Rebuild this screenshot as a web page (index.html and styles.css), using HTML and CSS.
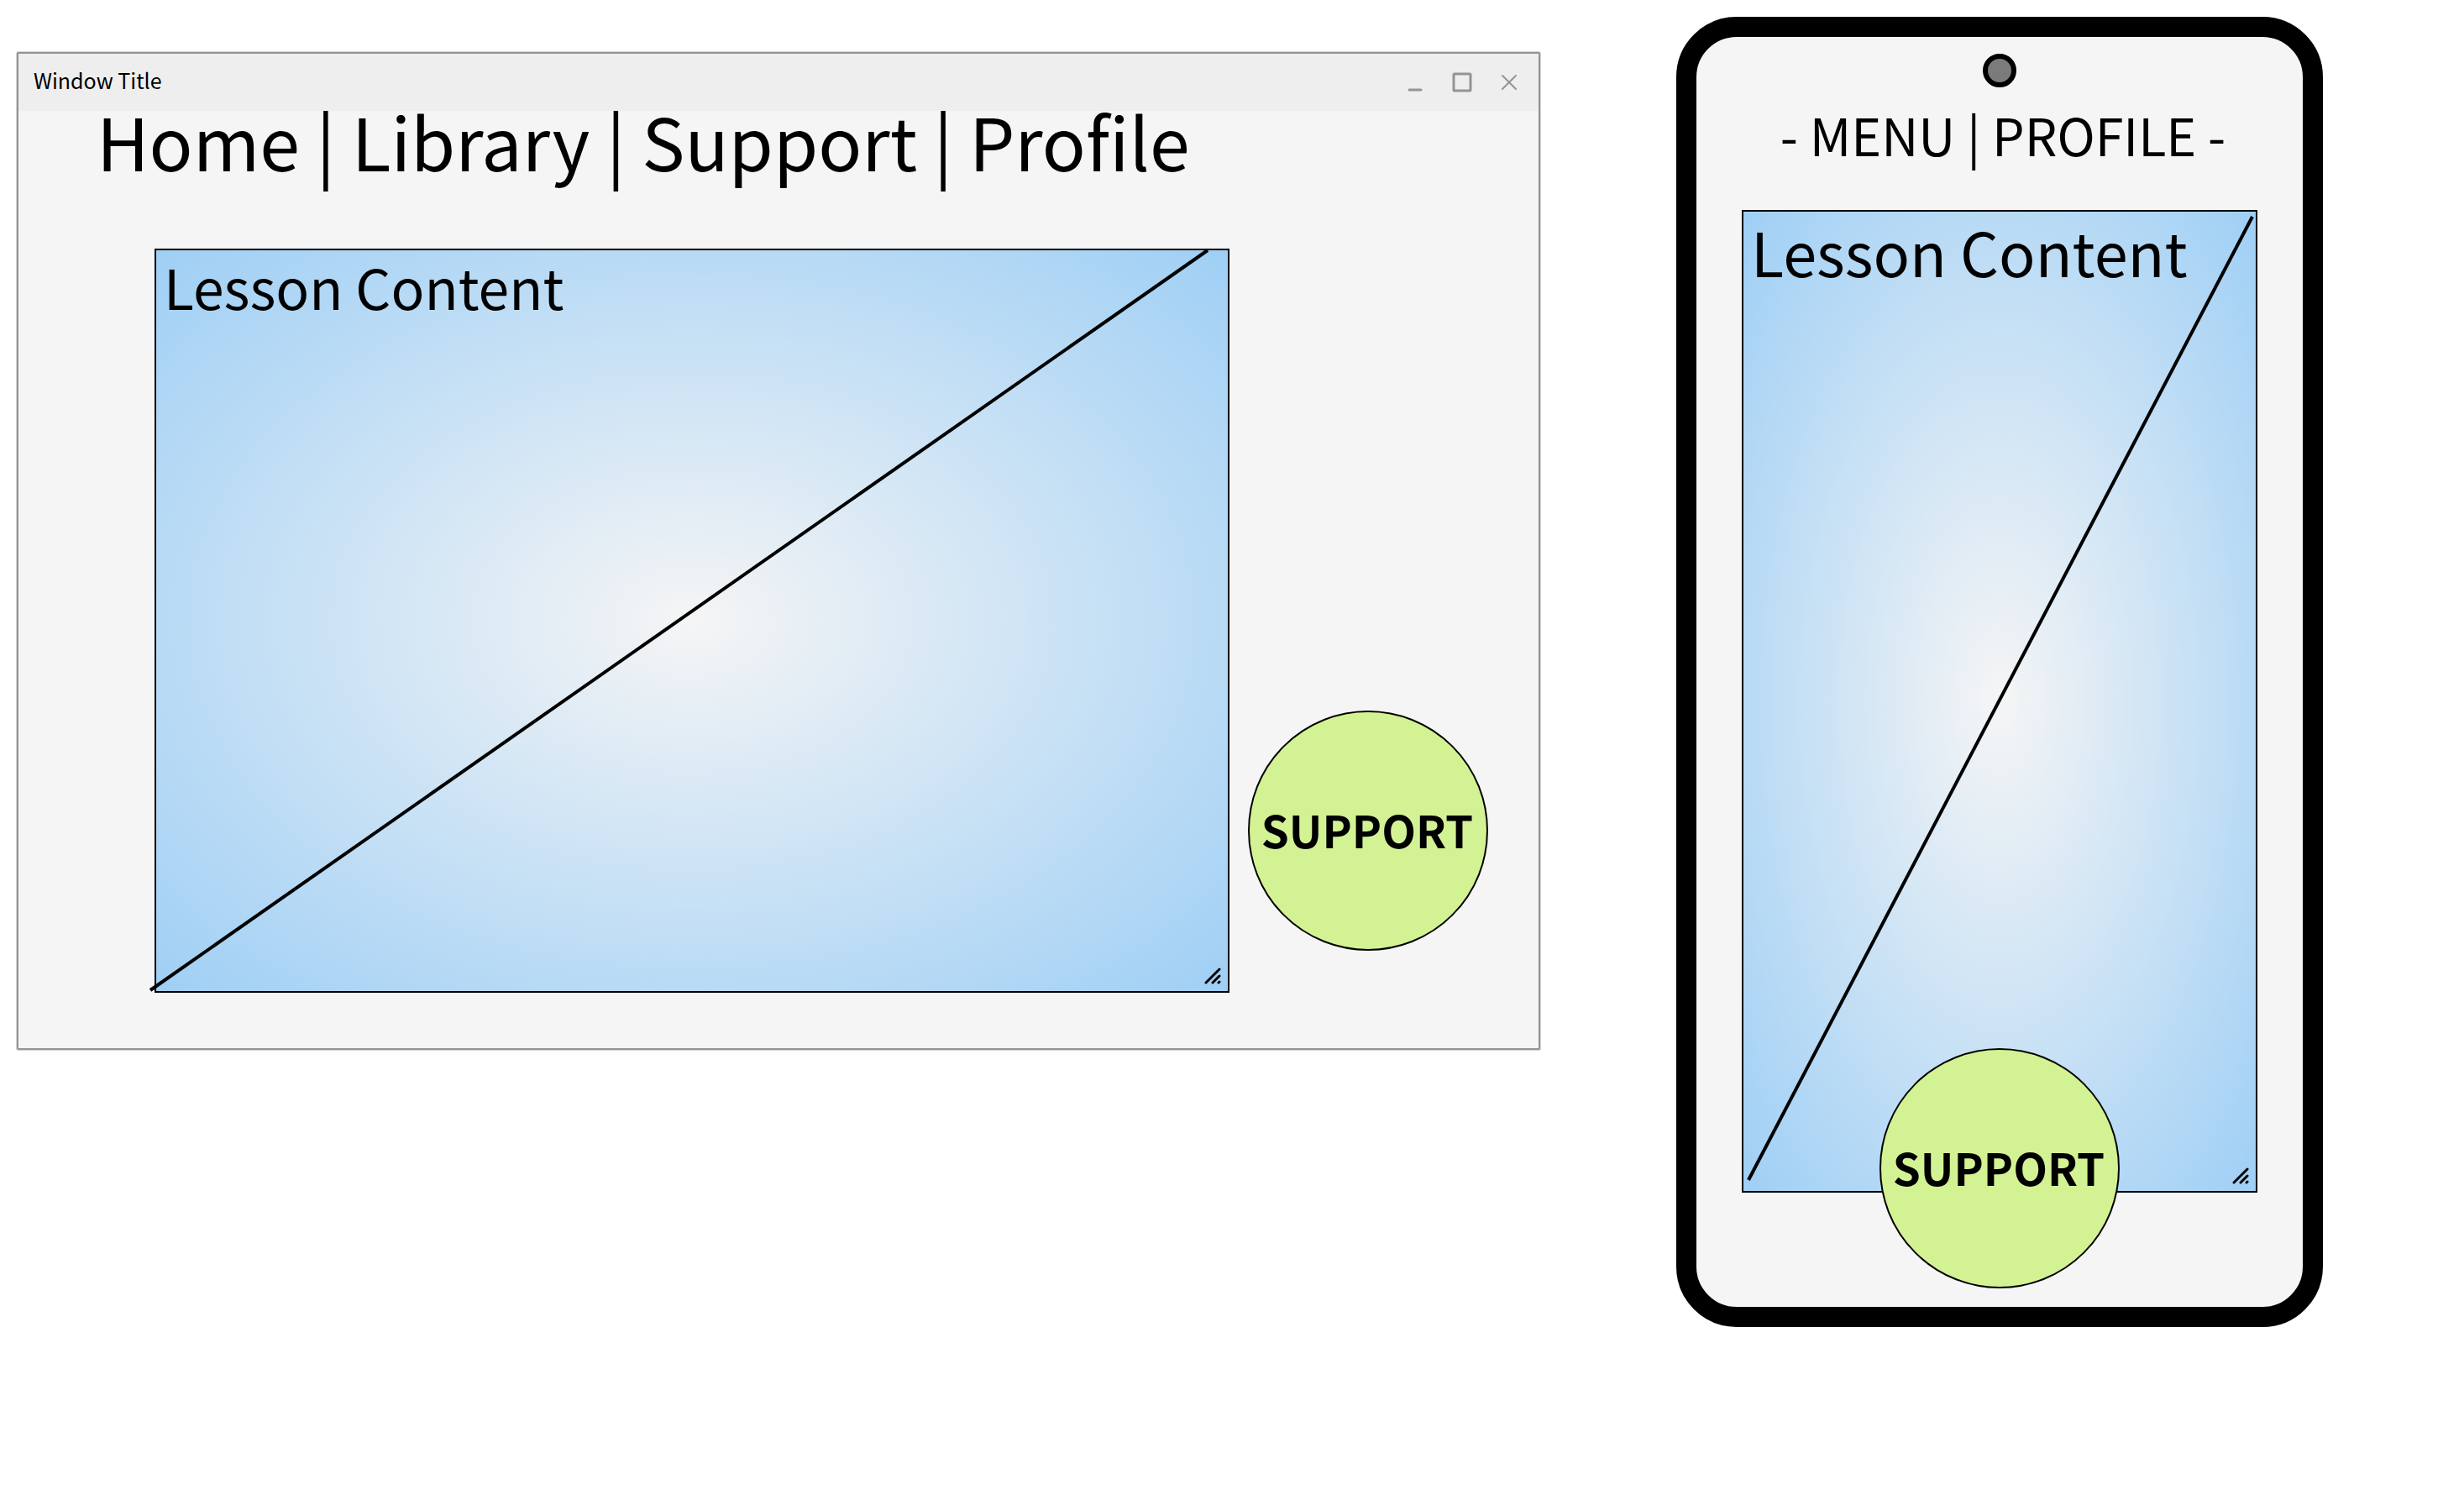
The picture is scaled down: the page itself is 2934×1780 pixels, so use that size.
FILE: index.html
```html
<!DOCTYPE html>
<html lang="en">
<head>
  <meta charset="utf-8">
  <title>Lesson wireframes</title>
  <link rel="stylesheet" href="styles.css">
</head>
<body>
  <main class="board">
    <section class="window" aria-label="Desktop layout">
      <header class="titlebar">
        <span class="titlebar-text">Window Title</span>
        <div class="window-controls">
          <button class="control" type="button" aria-label="Minimize">
            <svg viewBox="0 0 24 24"><path d="M5 21h14"/></svg>
          </button>
          <button class="control" type="button" aria-label="Maximize">
            <svg viewBox="0 0 24 24"><rect x="2" y="2" width="20" height="20" rx="1"/></svg>
          </button>
          <button class="control" type="button" aria-label="Close">
            <svg class="thin" viewBox="0 0 24 24"><path d="M4 4l16 16M20 4L4 20"/></svg>
          </button>
        </div>
      </header>
      <nav class="nav" aria-label="Main"><a href="#home">Home</a> | <a href="#library">Library</a> | <a href="#support">Support</a> | <a href="#profile">Profile</a></nav>
      <div class="workspace">
        <article class="lesson lesson-wide">
          <svg class="diagonal" viewBox="0 0 1276 882" preserveAspectRatio="none"><path d="M-7 881L1252 0"/></svg>
          <h2 class="lesson-title">Lesson Content</h2>
          <svg class="grip" viewBox="0 0 20 20"><path d="M2 18L18 2M10 18l8-8M17 18l1-1"/></svg>
        </article>
        <button class="support" type="button">SUPPORT</button>
      </div>
    </section>

    <section class="phone" aria-label="Phone layout">
      <div class="camera"></div>
      <nav class="phone-nav" aria-label="Phone">- <a href="#menu">MENU</a> | <a href="#phone-profile">PROFILE</a> -</nav>
      <article class="lesson lesson-tall">
        <svg class="diagonal" viewBox="0 0 610 1166" preserveAspectRatio="none"><path d="M6 1153L606 6"/></svg>
        <h2 class="lesson-title">Lesson Content</h2>
        <svg class="grip" viewBox="0 0 20 20"><path d="M2 18L18 2M10 18l8-8M17 18l1-1"/></svg>
      </article>
      <button class="support support-docked" type="button">SUPPORT</button>
    </section>
  </main>
</body>
</html>
```
FILE: styles.css
```css
* {
  box-sizing: border-box;
}

body {
  margin: 0;
  background: #fff;
  color: #000;
  font-family: "Noto Sans CJK SC", "Noto Sans CJK JP", sans-serif;
}

a {
  color: inherit;
  text-decoration: none;
}

button {
  margin: 0;
  padding: 0;
  color: inherit;
  font-family: inherit;
  cursor: pointer;
}

.board {
  display: grid;
  grid-template-columns: minmax(0, 1814fr) minmax(0, 770fr);
  align-items: start;
  gap: 162px;
  padding: 20px 168px 20px 20px;
}

/* Desktop window */

.window {
  margin-top: 42px;
  border: 2px solid #949494;
  border-radius: 2px;
  background: #f5f5f5;
  box-shadow: 0 0 0 1px #d4d4d4;
}

.titlebar {
  position: relative;
  z-index: 1;
  display: flex;
  align-items: center;
  justify-content: space-between;
  height: 68px;
  padding: 0 23px 0 18px;
  background: #eee;
}

.titlebar-text {
  padding-bottom: 6px;
  font-size: 25px;
  line-height: 36px;
}

.window-controls {
  display: flex;
  gap: 32px;
}

.control {
  width: 24px;
  height: 24px;
  border: 0;
  background: none;
}

.control svg {
  display: block;
  fill: none;
  stroke: #949494;
  stroke-width: 3;
  stroke-linecap: round;
}

.control .thin {
  stroke-width: 2;
}

.nav {
  padding: 0 93px 94px;
  font-size: 86px;
  line-height: 70px;
  white-space: pre;
}

.workspace {
  display: grid;
  grid-template-columns: minmax(0, 1fr) auto;
  align-items: end;
  gap: 22px;
  padding: 0 60px 66px 162px;
}

/* Lesson panels */

.lesson {
  position: relative;
  border: 2px solid #000;
  background: radial-gradient(ellipse farthest-corner, #f5f5f5, #9fcff5);
}

.lesson-wide {
  aspect-ratio: 1280 / 886;
  font-size: 66px;
}

.lesson-tall {
  aspect-ratio: 614 / 1170;
  font-size: 72px;
}

.lesson-title {
  margin: 0;
  padding-left: 9px;
  font-size: inherit;
  font-weight: 400;
  line-height: 1.3;
}

.diagonal {
  position: absolute;
  inset: 0;
  width: 100%;
  height: 100%;
  overflow: visible;
  fill: none;
  stroke: #000;
  stroke-width: 4;
}

.grip {
  position: absolute;
  right: 8px;
  bottom: 8px;
  width: 20px;
  height: 20px;
  fill: none;
  stroke: #000;
  stroke-width: 3;
  stroke-linecap: round;
}

.support {
  width: 286px;
  height: 286px;
  margin-bottom: 50px;
  padding: 0 2px 4px 0;
  border: 2px solid #000;
  border-radius: 50%;
  background: #d3f294;
  font-size: 53px;
  font-weight: 700;
  line-height: 80px;
}

/* Phone */

.phone {
  display: flex;
  flex-direction: column;
  padding: 20px 54px 22px;
  border: 24px solid #000;
  border-radius: 72px;
  background: #f5f5f5;
}

.camera {
  align-self: center;
  width: 40px;
  height: 40px;
  border: 6px solid #000;
  border-radius: 50%;
  background: #7b7b7b;
}

.phone-nav {
  margin: 16px 0 50px;
  padding-left: 8px;
  font-size: 61px;
  line-height: 80px;
  text-align: center;
  white-space: nowrap;
}

.support-docked {
  position: relative;
  align-self: center;
  margin: -172px 0 0;
}
```
